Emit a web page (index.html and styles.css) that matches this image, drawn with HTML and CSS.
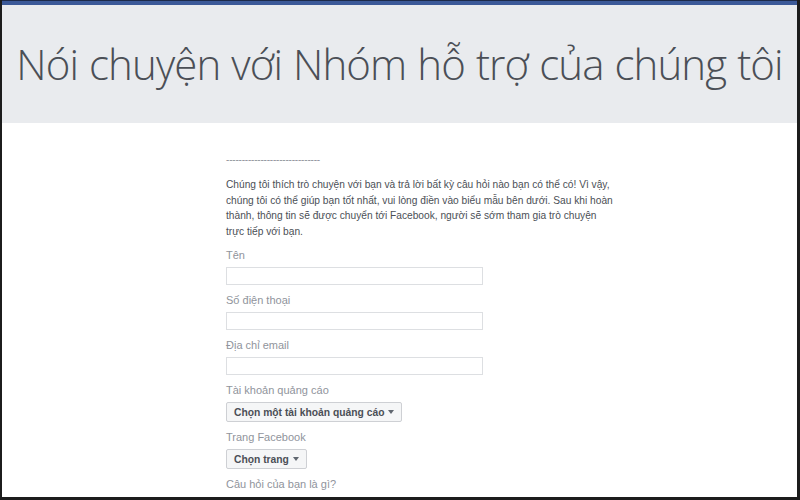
FILE: index.html
```html
<!DOCTYPE html>
<html lang="vi">

<head>
  <meta charset="UTF-8">
  <meta name="viewport" content="width=device-width, initial-scale=1.0">
  <title>Nói chuyện với Nhóm hỗ trợ</title>
  <link rel="stylesheet" href="styles.css">
</head>

<body>
  <div class="frame">
    <div class="topbar"></div>

    <div class="hero">
      <h1>Nói chuyện với Nhóm hỗ trợ của chúng tôi</h1>
    </div>

    <div class="content">
      <div class="column">
        <div class="divider">------------------------------</div>

        <p class="intro">Chúng tôi thích trò chuyện với bạn và trả lời bất kỳ câu hỏi nào bạn có thể có! Vì vậy,<br>
          chúng tôi có thể giúp bạn tốt nhất, vui lòng điền vào biểu mẫu bên dưới. Sau khi hoàn<br>
          thành, thông tin sẽ được chuyển tới Facebook, người sẽ sớm tham gia trò chuyện<br>
          trực tiếp với bạn.</p>

        <div class="field">
          <label>Tên</label>
          <input type="text" />
        </div>
        <div class="field">
          <label>Số điện thoại</label>
          <input type="text" />
        </div>
        <div class="field">
          <label>Địa chỉ email</label>
          <input type="text" />
        </div>
        <div class="field">
          <label>Tài khoản quảng cáo</label>
          <button class="select">Chọn một tài khoản quảng cáo <span class="caret"></span></button>
        </div>
        <div class="field">
          <label>Trang Facebook</label>
          <button class="select">Chọn trang <span class="caret"></span></button>
        </div>
        <div class="field">
          <label>Câu hỏi của bạn là gì?</label>
        </div>
      </div>
    </div>
  </div>
</body>

</html>
```

FILE: styles.css
```css
html,
body {
  margin: 0;
  height: 100%;
}

body {
  background-color: #1c1c1c;
  font-family: "Liberation Sans", Arial, sans-serif;
}

.frame {
  height: 497px;
  margin-left: 2px;
  margin-right: 3px;
  background-color: #fff;
  overflow: hidden;
}

.topbar {
  height: 4px;
  border-top: 1px solid #1d2a4a;
  background-color: #3b5998;
}

.hero {
  height: 118px;
  background-color: #e9ebee;
  display: flex;
  align-items: center;
  justify-content: center;
}

.hero h1 {
  margin: 0 0 2px;
  font-family: "Open Sans", sans-serif;
  font-weight: 300;
  font-size: 42px;
  letter-spacing: -0.9px;
  word-spacing: 1px;
  color: #4b4f56;
  white-space: nowrap;
}

.content {
  padding-left: 224px;
}

.column {
  width: 420px;
}

.divider {
  margin-top: 31px;
  font-size: 10px;
  color: #90949c;
  letter-spacing: -0.2px;
}

.intro {
  margin: 12px 0 9px;
  font-size: 10.2px;
  line-height: 15.5px;
  color: #4b4f56;
}

.field {
  display: flex;
  flex-direction: column;
  align-items: flex-start;
  margin-bottom: 8px;
}

.field label {
  font-size: 11px;
  line-height: 14px;
  color: #90949c;
  margin-bottom: 5px;
}

.field input {
  width: 257px;
  height: 18px;
  box-sizing: border-box;
  margin: 0;
  border: 1px solid #dddfe2;
  background-color: #fff;
}

.select {
  height: 20px;
  margin: 0;
  padding: 0 7px;
  border: 1px solid #ced0d4;
  border-radius: 2px;
  background-color: #f5f6f7;
  color: #4b4f56;
  font-family: "Liberation Sans", Arial, sans-serif;
  font-size: 10.3px;
  font-weight: bold;
  display: flex;
  align-items: center;
  gap: 4px;
}

.caret {
  width: 0;
  height: 0;
  border-left: 3.5px solid transparent;
  border-right: 3.5px solid transparent;
  border-top: 4px solid #606770;
}
```
